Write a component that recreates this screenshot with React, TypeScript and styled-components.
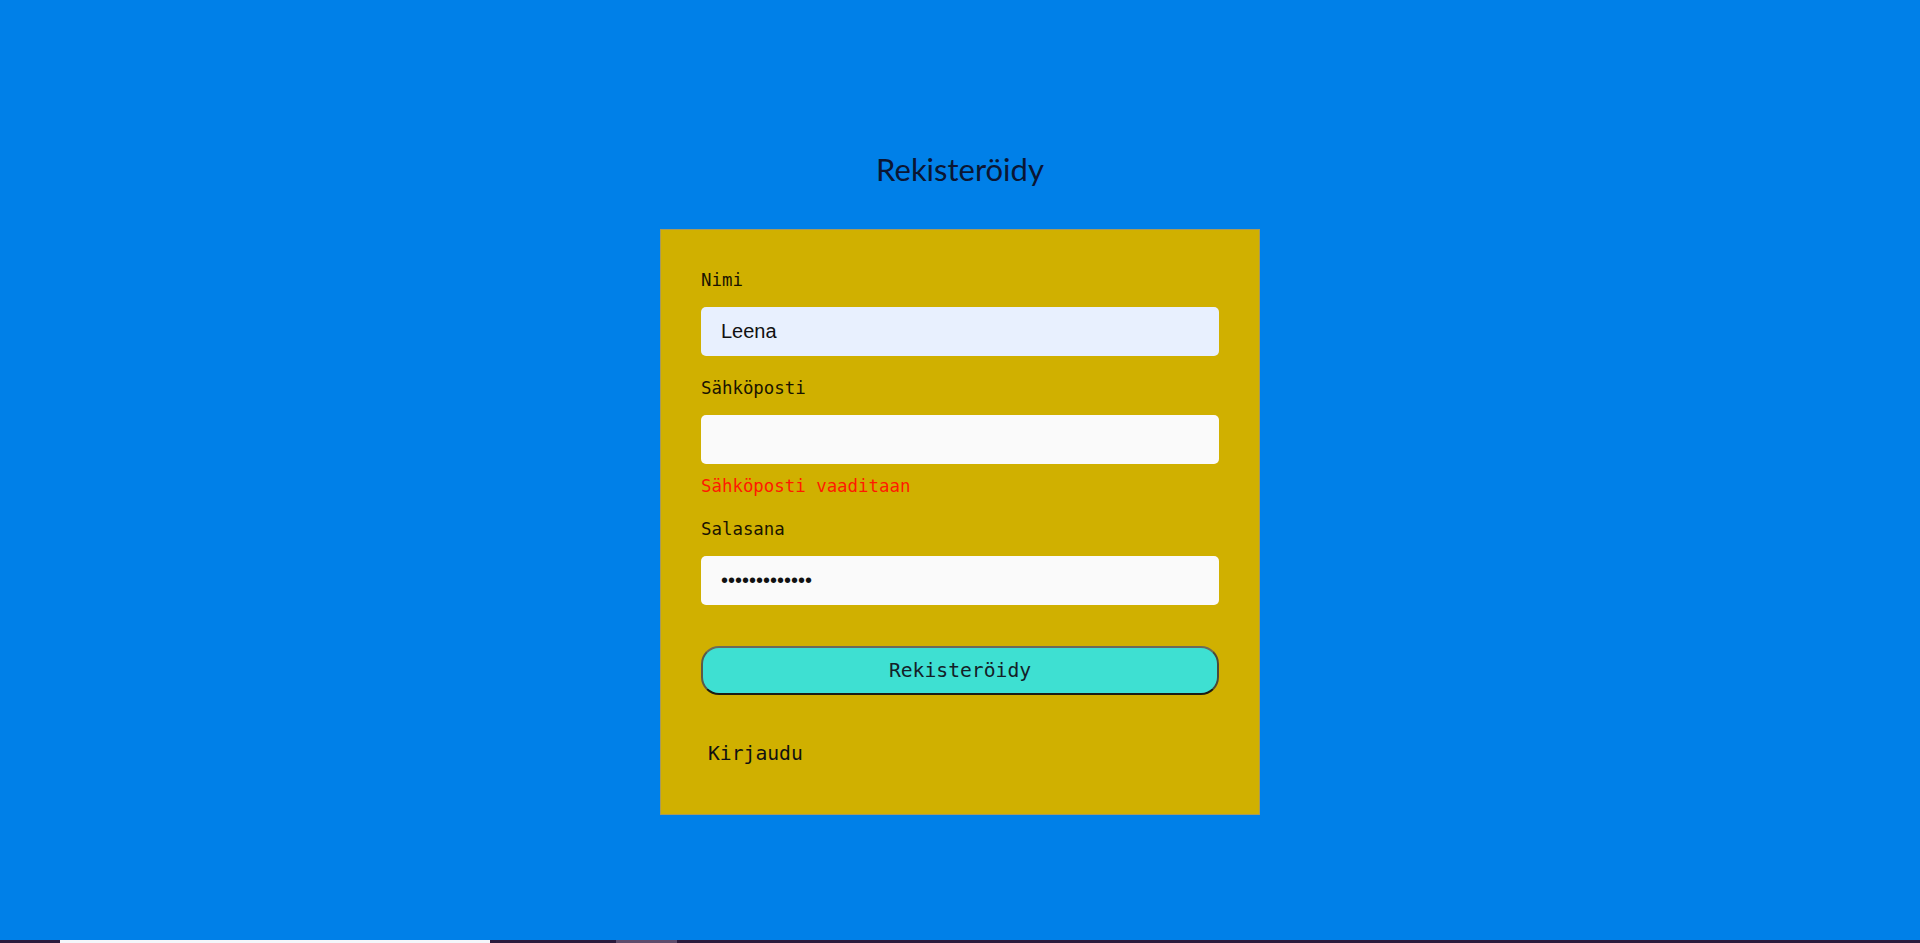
import styled, { createGlobalStyle } from "styled-components";

const GlobalStyle = createGlobalStyle`
  html, body {
    margin: 0;
    padding: 0;
    background: #0080e8;
  }
  * {
    box-sizing: border-box;
  }
`;

const Page = styled.div`
  min-height: 100vh;
  display: flex;
  flex-direction: column;
`;

const Main = styled.main`
  flex: 1;
  display: flex;
  flex-direction: column;
  align-items: center;
  padding-top: 149px;
`;

const Title = styled.h1`
  margin: 0 0 40px;
  font-family: "Lato", "Noto Sans", sans-serif;
  font-size: 31px;
  line-height: 40px;
  font-weight: 400;
  color: #0b1633;
`;

const Card = styled.form`
  width: 600px;
  padding: 40px 40px 48px;
  background: #d0b000;
  border: 1px solid #a89a5a;
  display: flex;
  flex-direction: column;
`;

const Label = styled.label`
  display: block;
  font-family: "DejaVu Sans Mono", "Liberation Mono", monospace;
  font-size: 17.4px;
  line-height: 20px;
  color: #1a1400;
  margin-bottom: 17px;
`;

const Input = styled.input<{ $filled?: boolean }>`
  display: block;
  width: 100%;
  height: 49px;
  border: none;
  border-radius: 5px;
  padding: 0 20px;
  background: ${({ $filled }) => ($filled ? "#e8f0fe" : "#fafafa")};
  font-family: "Liberation Sans", Arial, sans-serif;
  font-size: 20px;
  color: #111;
  outline: none;
`;

const Field = styled.div<{ $gap?: number }>`
  margin-bottom: ${({ $gap }) => $gap ?? 22}px;
`;

const ErrorText = styled.div`
  margin-top: 12px;
  font-family: "DejaVu Sans Mono", "Liberation Mono", monospace;
  font-size: 17.4px;
  line-height: 20px;
  color: #ff1a00;
`;

const SubmitButton = styled.button`
  margin-top: 41px;
  width: 100%;
  height: 49px;
  border: 2px solid;
  border-color: #6b6b5a #4a4a3a #1c1c14 #5a5a4a;
  border-radius: 18px;
  background: #3ee0d2;
  font-family: "DejaVu Sans Mono", "Liberation Mono", monospace;
  font-size: 19.7px;
  color: #142028;
  cursor: pointer;
`;

const LoginLink = styled.a`
  display: block;
  margin: 47px 0 0 7px;
  font-family: "DejaVu Sans Mono", "Liberation Mono", monospace;
  font-size: 19.7px;
  line-height: 24px;
  color: #111;
  text-decoration: none;
`;

const TaskStrip = styled.div`
  height: 3px;
  background: #2a1a3c;
  display: flex;
`;

const StripSegment = styled.div<{ $w: number; $c: string }>`
  width: ${({ $w }) => $w}px;
  background: ${({ $c }) => $c};
`;

export default function App() {
  return (
    <>
      <GlobalStyle />
      <Page>
        <Main>
          <Title>Rekisteröidy</Title>
          <Card onSubmit={(e) => e.preventDefault()}>
            <Field>
              <Label htmlFor="nimi">Nimi</Label>
              <Input id="nimi" $filled defaultValue="Leena" />
            </Field>
            <Field $gap={23}>
              <Label htmlFor="email">Sähköposti</Label>
              <Input id="email" type="email" />
              <ErrorText>Sähköposti vaaditaan</ErrorText>
            </Field>
            <Field $gap={0}>
              <Label htmlFor="pw">Salasana</Label>
              <Input id="pw" type="password" defaultValue="salasana12345" />
            </Field>
            <SubmitButton type="submit">Rekisteröidy</SubmitButton>
            <LoginLink href="#">Kirjaudu</LoginLink>
          </Card>
        </Main>
        <TaskStrip>
          <StripSegment $w={60} $c="#2a1a3c" />
          <StripSegment $w={430} $c="#f4f6fa" />
          <StripSegment $w={126} $c="#2a1a3c" />
          <StripSegment $w={61} $c="#5e4c6c" />
        </TaskStrip>
      </Page>
    </>
  );
}
